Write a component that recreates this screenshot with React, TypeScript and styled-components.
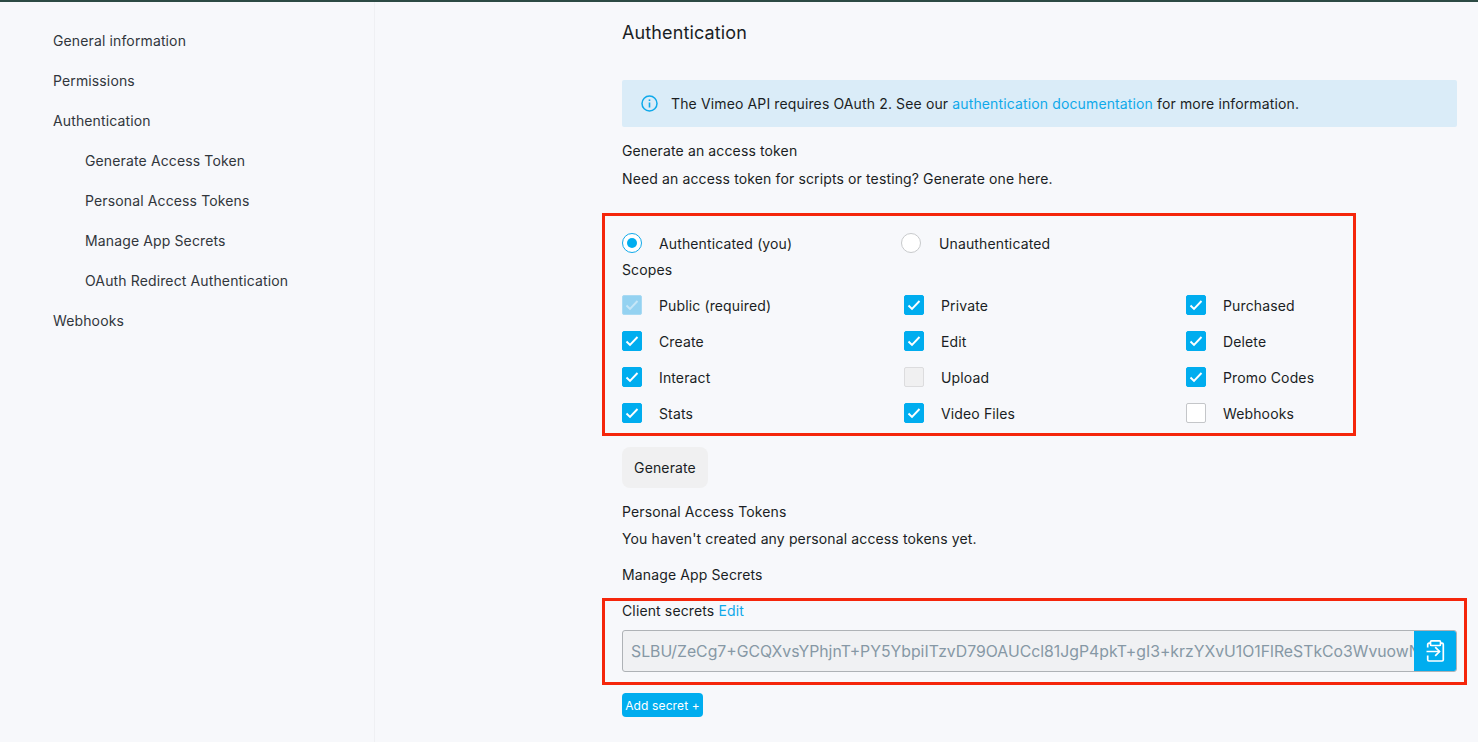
import React from "react";
import styled, { createGlobalStyle } from "styled-components";

const GlobalStyle = createGlobalStyle`
  html, body {
    margin: 0;
    padding: 0;
    background: #f7f8fb;
  }
  body {
    font-family: 'Inter', 'Liberation Sans', sans-serif;
    font-size: 14px;
    letter-spacing: 0.13px;
    color: #1a1e24;
  }
  * { box-sizing: border-box; }
`;

const Page = styled.div`
  height: 742px;
  overflow: hidden;
  border-top: 2px solid #2c4a44;
  display: flex;
`;

const Sidebar = styled.nav`
  width: 375px;
  flex: none;
  padding: 19px 0 0 53px;
  border-right: 1px solid #eff0f3;
`;

const NavItem = styled.div<{ $sub?: boolean }>`
  height: 40px;
  line-height: 40px;
  padding-left: ${(p) => (p.$sub ? "32px" : "0")};
  color: #31363c;
`;

const Main = styled.main`
  flex: 1;
  padding: 0 21px 0 247px;
`;

const Title = styled.h1`
  margin: 19px 0 0;
  height: 24px;
  line-height: 24px;
  font-size: 18px;
  font-weight: 400;
`;

const Banner = styled.div`
  margin-top: 35px;
  width: 835px;
  height: 47px;
  display: flex;
  align-items: center;
  gap: 13px;
  padding: 0 0 1px 19px;
  background: #daecf8;
  border-radius: 2px;
`;

const Link = styled.span`
  color: #0fa9ea;
`;

const Line = styled.div<{ $top: number }>`
  margin-top: ${(p) => p.$top}px;
  height: 18px;
  line-height: 18px;
`;

const Annotated = styled.section<{ $top: number; $width: number; $bottom: number }>`
  margin: ${(p) => p.$top}px 0 0 -20px;
  width: ${(p) => p.$width}px;
  border: 3px solid #f5260b;
  padding: 0 7px ${(p) => p.$bottom}px 17px;
`;

const RadioRow = styled.div`
  display: flex;
  align-items: center;
  height: 20px;
  margin-top: 17px;
`;

const RadioOption = styled.label<{ $width: number; $gap: number }>`
  width: ${(p) => p.$width}px;
  display: flex;
  align-items: center;
  gap: ${(p) => p.$gap}px;
`;

const RadioDot = styled.span<{ $on?: boolean }>`
  width: 20px;
  height: 20px;
  border-radius: 50%;
  background: #fff;
  border: 1px solid ${(p) => (p.$on ? "#0fa9ea" : "#c8cacc")};
  display: flex;
  align-items: center;
  justify-content: center;
  &::after {
    content: "";
    width: 10px;
    height: 10px;
    border-radius: 50%;
    background: ${(p) => (p.$on ? "#00adef" : "transparent")};
  }
`;

const ScopeGrid = styled.div`
  display: grid;
  grid-template-columns: repeat(3, 282px);
  grid-auto-rows: 20px;
  row-gap: 16px;
  margin-top: 16px;
`;

const Scope = styled.label`
  display: flex;
  align-items: center;
  gap: 17px;
`;

const CheckBox = styled.span<{ $state: ScopeState }>`
  width: 20px;
  height: 20px;
  border-radius: 2px;
  display: flex;
  align-items: center;
  justify-content: center;
  background: ${(p) =>
    p.$state === "on"
      ? "#00adef"
      : p.$state === "muted"
        ? "#94d2f1"
        : p.$state === "off"
          ? "#f0f0f1"
          : "#fff"};
  border: 1px solid
    ${(p) =>
      p.$state === "on"
        ? "#00adef"
        : p.$state === "muted"
          ? "#a9daf3"
          : p.$state === "off"
            ? "#dcdcde"
            : "#c4c6c9"};
`;

const GenerateButton = styled.button`
  display: block;
  margin-top: 11px;
  width: 86px;
  height: 41px;
  border: 0;
  border-radius: 8px;
  background: #f0f0f1;
  color: #1a1e24;
  font: inherit;
  letter-spacing: inherit;
  padding: 0;
`;

const SecretField = styled.div`
  margin-top: 10px;
  height: 42px;
  width: 835px;
  display: flex;
  border: 1px solid #aeb2b6;
  border-radius: 3px;
  background: #f0f1f3;
  overflow: hidden;
`;

const SecretValue = styled.input`
  flex: 1;
  min-width: 0;
  padding: 0 0 0 8px;
  border: 0;
  outline: 0;
  background: transparent;
  font-family: inherit;
  font-size: 15.8px;
  letter-spacing: 0;
  color: #8698a5;
`;

const CopyButton = styled.div`
  width: 42px;
  flex: none;
  background: #00adef;
  display: flex;
  align-items: center;
  justify-content: center;
`;

const AddButton = styled.button`
  display: block;
  margin-top: 8px;
  width: 81px;
  height: 24px;
  border: 0;
  border-radius: 4px;
  background: #00adef;
  color: #fff;
  font: inherit;
  font-size: 12px;
  letter-spacing: inherit;
  padding: 0;
`;

const Tick = ({ color }: { color: string }) => (
  <svg width="14" height="12" viewBox="0 0 14 12" fill="none">
    <path d="M1.5 6.5 L5 10 L12.5 2" stroke={color} strokeWidth="1.9" />
  </svg>
);

const InfoIcon = () => (
  <svg width="17" height="17" viewBox="0 0 17 17" fill="none" stroke="#0fa9ea">
    <circle cx="8.5" cy="8.5" r="7.5" strokeWidth="1.5" />
    <path d="M8.5 7.5 V12.5" strokeWidth="1.6" />
    <path d="M8.5 4.4 V6" strokeWidth="1.6" />
  </svg>
);

const ClipboardIcon = () => (
  <svg width="19" height="22" viewBox="0 0 19 22" fill="none" stroke="#fff" strokeWidth="1.7">
    <path d="M4.5 3.2 H3 Q1.7 3.2 1.7 4.5 V7.5" />
    <path d="M1.7 15.5 V19.7 Q1.7 21 3 21 H16 Q17.3 21 17.3 19.7 V4.5 Q17.3 3.2 16 3.2 H14.5" />
    <rect x="4.5" y="0.9" width="10" height="4.6" rx="1" />
    <path d="M0.5 11.5 H13.5" />
    <path d="M9.2 7.2 L13.5 11.5 L9.2 15.8" />
  </svg>
);

const navItems = [
  { label: "General information" },
  { label: "Permissions" },
  { label: "Authentication" },
  { label: "Generate Access Token", sub: true },
  { label: "Personal Access Tokens", sub: true },
  { label: "Manage App Secrets", sub: true },
  { label: "OAuth Redirect Authentication", sub: true },
  { label: "Webhooks" },
];

type ScopeState = "on" | "muted" | "off" | "blank";

const scopes: { label: string; state: ScopeState }[] = [
  { label: "Public (required)", state: "muted" },
  { label: "Private", state: "on" },
  { label: "Purchased", state: "on" },
  { label: "Create", state: "on" },
  { label: "Edit", state: "on" },
  { label: "Delete", state: "on" },
  { label: "Interact", state: "on" },
  { label: "Upload", state: "off" },
  { label: "Promo Codes", state: "on" },
  { label: "Stats", state: "on" },
  { label: "Video Files", state: "on" },
  { label: "Webhooks", state: "blank" },
];

const App = () => {
  return (
    <>
      <GlobalStyle />
      <Page>
        <Sidebar>
          {navItems.map((item) => (
            <NavItem key={item.label} $sub={item.sub}>
              {item.label}
            </NavItem>
          ))}
        </Sidebar>
        <Main>
          <Title>Authentication</Title>
          <Banner>
            <InfoIcon />
            <span>
              The Vimeo API requires OAuth 2. See our <Link>authentication documentation</Link> for
              more information.
            </span>
          </Banner>
          <Line $top={15}>Generate an access token</Line>
          <Line $top={10}>Need an access token for scripts or testing? Generate one here.</Line>
          <Annotated $top={25} $width={754} $bottom={10}>
            <RadioRow>
              <RadioOption $width={279} $gap={17}>
                <RadioDot $on />
                Authenticated (you)
              </RadioOption>
              <RadioOption $width={200} $gap={18}>
                <RadioDot />
                Unauthenticated
              </RadioOption>
            </RadioRow>
            <Line $top={8}>Scopes</Line>
            <ScopeGrid>
              {scopes.map((s) => (
                <Scope key={s.label}>
                  <CheckBox $state={s.state}>
                    {s.state === "on" && <Tick color="#fff" />}
                    {s.state === "muted" && <Tick color="#c6e6f7" />}
                  </CheckBox>
                  {s.label}
                </Scope>
              ))}
            </ScopeGrid>
          </Annotated>
          <GenerateButton>Generate</GenerateButton>
          <Line $top={15}>Personal Access Tokens</Line>
          <Line $top={9}>You haven't created any personal access tokens yet.</Line>
          <Line $top={18}>Manage App Secrets</Line>
          <Annotated $top={14} $width={865} $bottom={10}>
            <Line $top={1}>
              Client secrets <Link>Edit</Link>
            </Line>
            <SecretField>
              <SecretValue
                readOnly
                value="SLBU/ZeCg7+GCQXvsYPhjnT+PY5YbpiITzvD79OAUCcl81JgP4pkT+gI3+krzYXvU1O1FlReSTkCo3WvuowNxT8aKe"
              />
              <CopyButton>
                <ClipboardIcon />
              </CopyButton>
            </SecretField>
          </Annotated>
          <AddButton>Add secret +</AddButton>
        </Main>
      </Page>
    </>
  );
};

export default App;
